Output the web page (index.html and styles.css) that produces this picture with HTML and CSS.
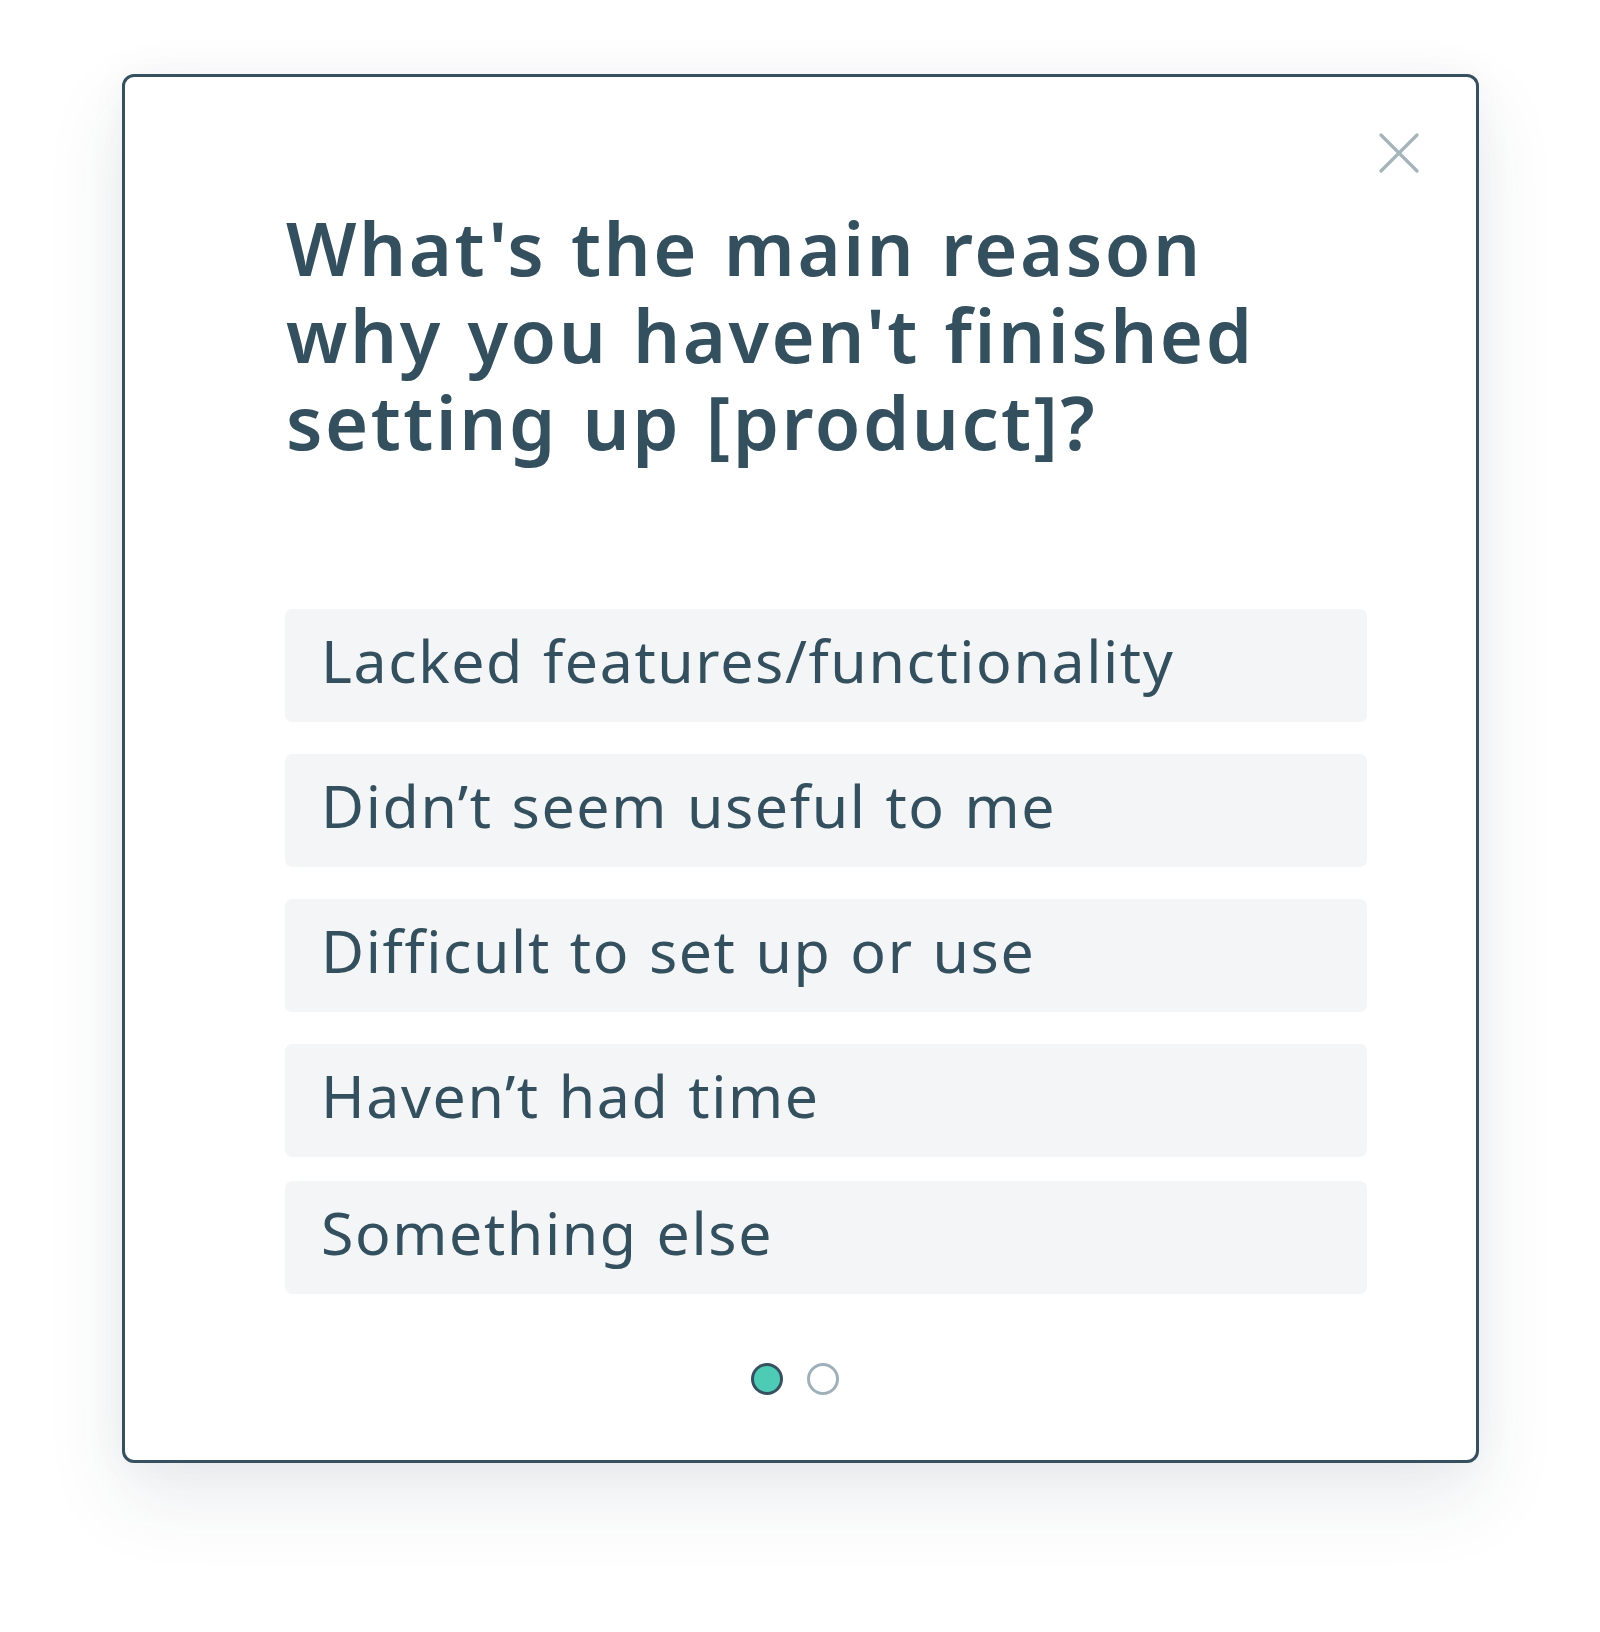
FILE: index.html
```html
<!DOCTYPE html>
<html lang="en">
<head>
    <meta charset="UTF-8">
    <meta name="viewport" content="width=device-width, initial-scale=1.0">
    <title>Survey</title>
    <link rel="stylesheet" href="styles.css">
</head>
<body>
    <div class="modal">
        <button class="close" type="button" aria-label="Close">
            <svg width="40" height="40" viewBox="0 0 40 40">
                <path d="M2 2 L38 38 M38 2 L2 38" stroke="#a5b3ba" stroke-width="3.2" stroke-linecap="round" fill="none"/>
            </svg>
        </button>

        <h1 class="question">What's the main reason why you haven't finished setting up [product]?</h1>

        <div class="options">
            <button class="option" type="button">Lacked features/functionality</button>
            <button class="option" type="button">Didn’t seem useful to me</button>
            <button class="option" type="button">Difficult to set up or use</button>
            <button class="option" type="button">Haven’t had time</button>
            <button class="option last" type="button">Something else</button>
        </div>

        <div class="dots">
            <span class="dot active"></span>
            <span class="dot"></span>
        </div>
    </div>
</body>
</html>
```

FILE: styles.css
```css
* {
    box-sizing: border-box;
    font-family: 'Noto Sans', 'Lato', sans-serif;
}

html, body {
    min-height: 100%;
}

body {
    margin: 0;
    padding: 74px 0 170px 122px;
    background: #fff;
    color: #34505f;
}

.modal {
    position: relative;
    width: 1357px;
    height: 1389px;
    border: 3px solid #36505f;
    border-radius: 12px;
    background: #fff;
    box-shadow: 0 34px 80px rgba(40, 60, 75, 0.1), 0 0 40px rgba(40, 60, 75, 0.04);
    padding: 127px 109px 0 160px;
    display: flex;
    flex-direction: column;
}

.close {
    position: absolute;
    top: 56px;
    right: 57px;
    padding: 0;
    border: none;
    background: none;
    width: 40px;
    height: 40px;
    cursor: pointer;
}

.close svg {
    display: block;
}

.question {
    margin: 0 0 0 1px;
    font-size: 74px;
    line-height: 87px;
    font-weight: 600;
    letter-spacing: 2.5px;
    word-spacing: 3px;
    max-width: 1010px;
}

.options {
    margin-top: 144px;
    display: flex;
    flex-direction: column;
    gap: 32px;
}

.option {
    height: 113px;
    border: none;
    border-radius: 7px;
    background: #f3f5f7;
    color: #34505f;
    text-align: left;
    padding: 0 0 12px 36px;
    font-size: 59px;
    letter-spacing: 1.6px;
    word-spacing: 2px;
    cursor: pointer;
}

.option.last {
    margin-top: -8px;
}

.dots {
    margin-top: 69px;
    display: flex;
    justify-content: center;
    gap: 24px;
    padding-right: 62px;
}

.dot {
    width: 32px;
    height: 32px;
    border-radius: 50%;
    border: 3px solid #9fb0b8;
    background: #fff;
}

.dot.active {
    border-color: #36505f;
    background: #4ecbb4;
}
```
